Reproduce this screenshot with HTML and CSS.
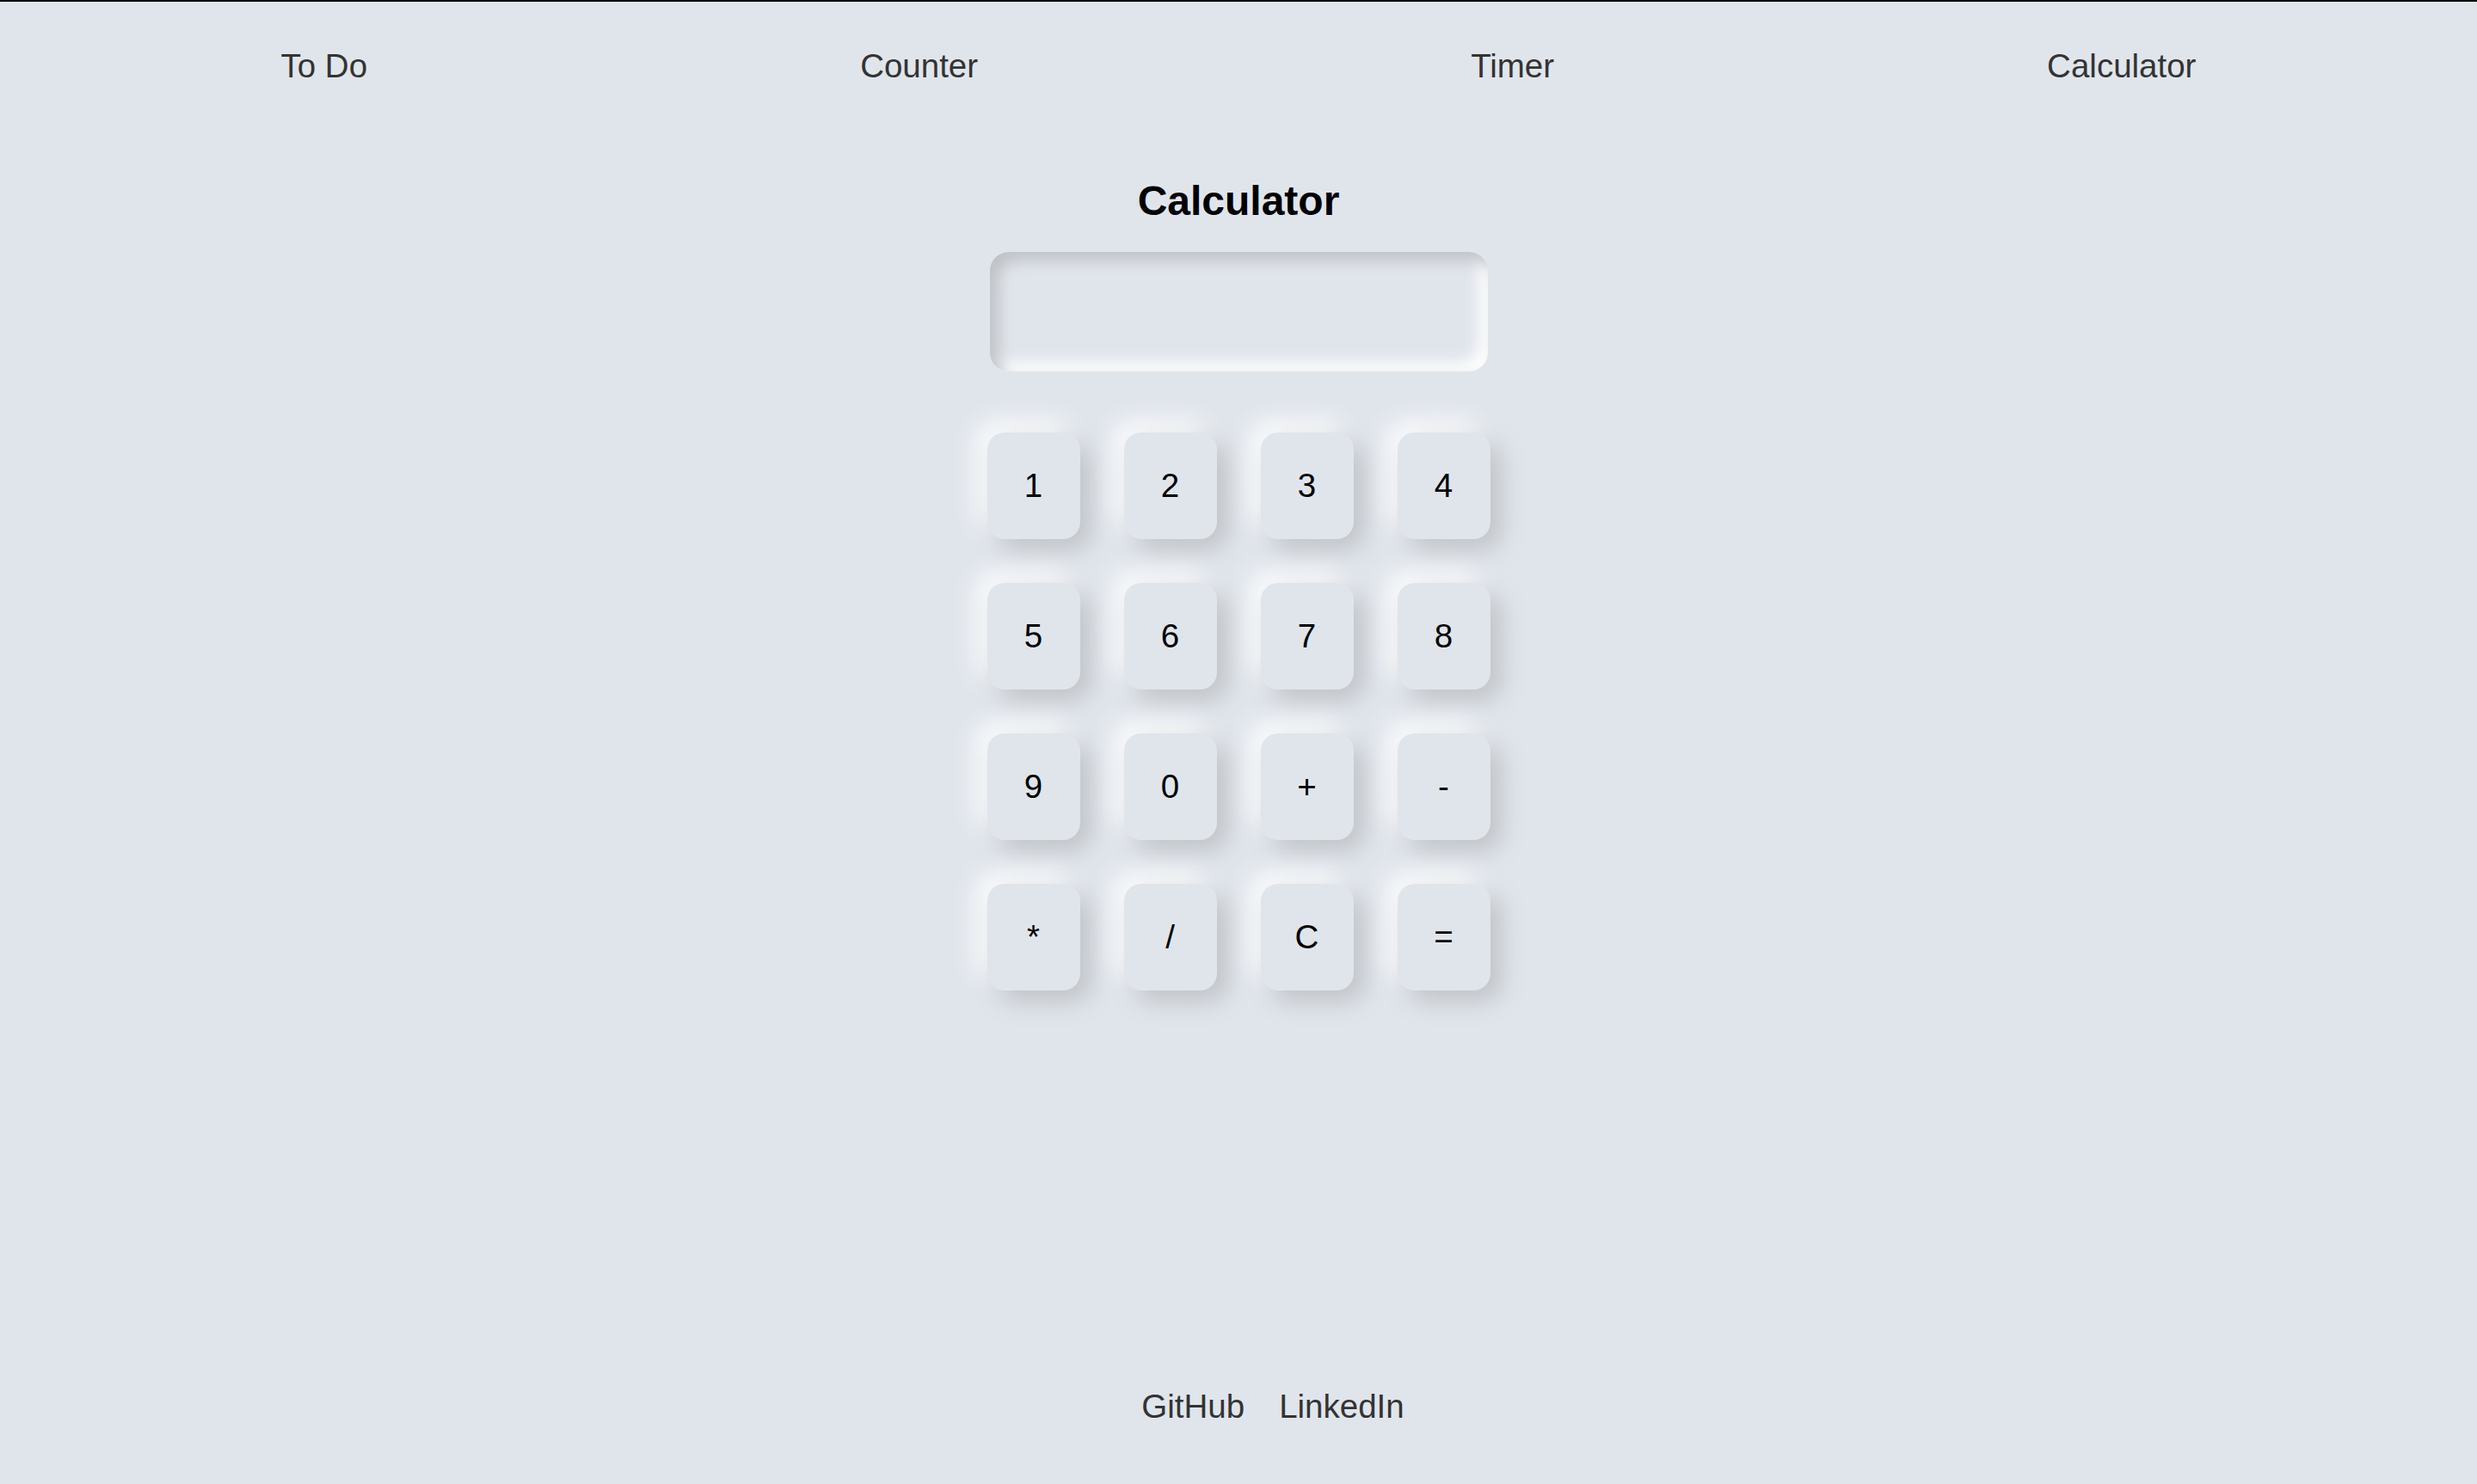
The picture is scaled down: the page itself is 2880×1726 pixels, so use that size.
FILE: index.html
```html
<!DOCTYPE html>
<html lang="en">
<head>
<meta charset="utf-8">
<title>Calculator</title>
<link rel="stylesheet" href="styles.css">
</head>
<body>
<div class="page">
  <nav class="nav">
    <a class="nav-link" href="#">To Do</a>
    <a class="nav-link" href="#">Counter</a>
    <a class="nav-link" href="#">Timer</a>
    <a class="nav-link" href="#">Calculator</a>
  </nav>
  <main class="main">
    <h1 class="title">Calculator</h1>
    <div class="display"></div>
    <div class="keys">
      <button class="key">1</button>
      <button class="key">2</button>
      <button class="key">3</button>
      <button class="key">4</button>
      <button class="key">5</button>
      <button class="key">6</button>
      <button class="key">7</button>
      <button class="key">8</button>
      <button class="key">9</button>
      <button class="key">0</button>
      <button class="key">+</button>
      <button class="key">-</button>
      <button class="key">*</button>
      <button class="key">/</button>
      <button class="key">C</button>
      <button class="key">=</button>
    </div>
  </main>
  <footer class="footer">
    <a class="footer-link" href="#">GitHub</a>
    <a class="footer-link" href="#">LinkedIn</a>
  </footer>
</div>
</body>
</html>
```
FILE: styles.css
```css
* {
  box-sizing: border-box;
}

html, body {
  margin: 0;
  padding: 0;
}

body {
  background: #e0e5ec;
  font-family: "Liberation Sans", Arial, sans-serif;
  border-top: 2px solid #000;
}

.page {
  min-height: calc(100vh - 2px);
  display: flex;
  flex-direction: column;
}

.nav {
  display: flex;
  justify-content: space-around;
  padding: 53px 40px 0;
}

.nav-link {
  color: #333;
  text-decoration: none;
  font-size: 38.5px;
  line-height: 44px;
}

.main {
  flex: 1;
  display: flex;
  flex-direction: column;
  align-items: center;
}

.title {
  margin: 107px 0 0;
  font-size: 48px;
  line-height: 56px;
  font-weight: bold;
  color: #000;
}

.display {
  margin-top: 31px;
  width: 579px;
  height: 139px;
  border-radius: 22px;
  background: #e0e5ec;
  box-shadow: inset 10px 10px 18px #bfc2c6, inset -10px -10px 18px #ffffff;
}

.keys {
  margin-top: 71px;
  display: grid;
  grid-template-columns: repeat(4, 108px);
  grid-auto-rows: 124px;
  column-gap: 51px;
  row-gap: 51px;
}

.key {
  border: none;
  padding: 0;
  margin: 0;
  background: #e0e5ec;
  border-radius: 20px;
  font-family: "Liberation Sans", Arial, sans-serif;
  font-size: 38.5px;
  color: #000;
  box-shadow: 12px 12px 30px #bec1c5, -12px -12px 30px #ffffff;
  display: flex;
  align-items: center;
  justify-content: center;
}

.footer {
  display: flex;
  justify-content: center;
  gap: 40px;
  padding: 0 0 68px 80px;
}

.footer-link {
  color: #333;
  text-decoration: none;
  font-size: 38.5px;
  line-height: 44px;
}
```
